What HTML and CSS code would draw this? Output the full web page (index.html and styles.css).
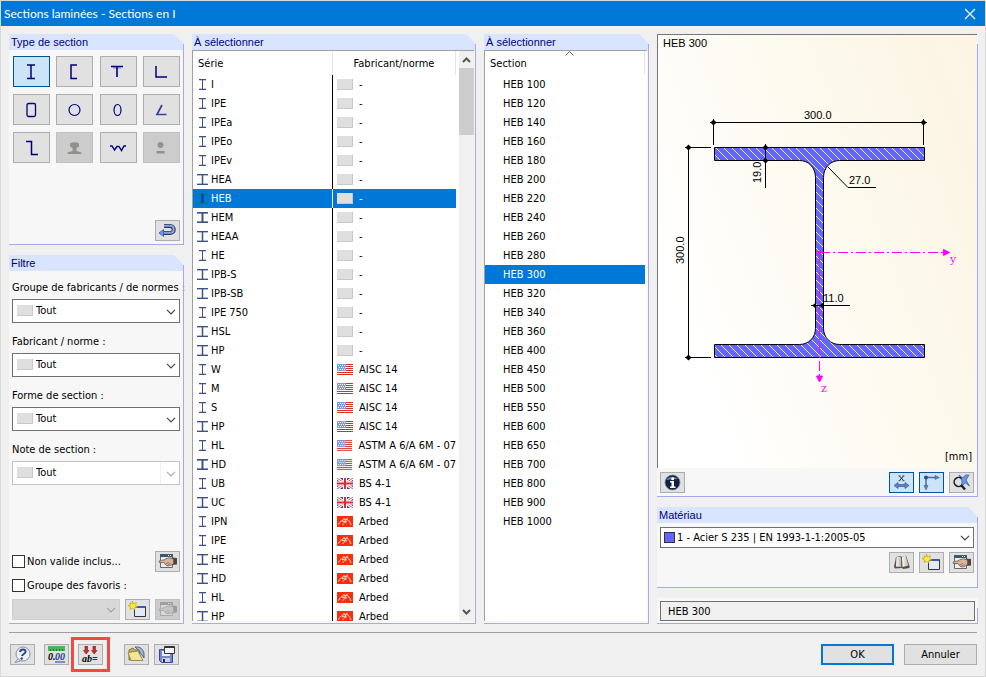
FILE: index.html
```html
<!DOCTYPE html>
<html lang="fr">
<head>
<meta charset="utf-8">
<title>Sections laminées - Sections en I</title>
<link rel="stylesheet" href="styles.css">
</head>
<body>
<svg class="defs" aria-hidden="true">
  <defs>
    <linearGradient id="page" x1="0" x2="1"><stop offset="0" stop-color="#fff"/><stop offset="1" stop-color="#b9b2a8"/></linearGradient>
    <symbol id="i-narrow" viewBox="0 0 12 11"><path d="M2 1.500h7M2 9.500h7" stroke="#c9cfe2"/><path d="M2 .5h7M2 10.500h7M5.500 1v9" stroke="#3f5087"/></symbol>
    <symbol id="i-wide" viewBox="0 0 12 11"><path d="M0 1.500h11M0 9.500h11" stroke="#b4bcd8"/><path d="M0 .5h11M0 10.500h11" stroke="#3f5087"/><path d="M5.500 1v9" stroke="#3f5087" stroke-width="1.500"/></symbol>
    <symbol id="i-thick" viewBox="0 0 12 11"><path d="M0 1.500h11M0 9.500h11" stroke="#8390ba"/><path d="M0 .5h11M0 10.500h11" stroke="#3f5087"/><path d="M5.500 1v9" stroke="#3f5087" stroke-width="2"/></symbol>
    <symbol id="i-selected" viewBox="0 0 12 11"><path d="M0 1h11M0 10h11" stroke="#007c8c" stroke-width="2"/><path d="M5.500 1v9" stroke="#00458f" stroke-width="2.500"/></symbol>
    <symbol id="f-none" viewBox="0 0 16 11"><path fill="#dfdfdf" d="M0 0h16v11H0z"/><path d="M0 10.500h15.500V0" fill="none" stroke="#c8c8c8"/></symbol>
    <symbol id="f-us" viewBox="0 0 16 11"><path fill="#fff" d="M0 0h16v11H0z"/><path d="M0 .5h16M0 2.500h16M0 4.500h16M0 6.500h16M0 8.500h16M0 10.500h16" stroke="#dc2f22"/><path fill="#7f9bdc" d="M0 0h9v7H0z"/><path d="M1 1.500h8M2 3.500h7M1 5.500h8" stroke="#fff" stroke-dasharray="1 1"/></symbol>
    <symbol id="f-uk" viewBox="0 0 16 11"><path fill="#3049a0" d="M0 0h16v11H0z"/><path d="M0 0l16 11M16 0L0 11" stroke="#fff" stroke-width="3"/><path d="M0 0l16 11M16 0L0 11" stroke="#e05a5a"/><path d="M8 0v11M0 5.500h16" stroke="#fff" stroke-width="4"/><path d="M8 0v11M0 5.500h16" stroke="#e0282e" stroke-width="2"/></symbol>
    <symbol id="f-arbed" viewBox="0 0 16 11"><path fill="#fb2d0b" d="M0 0h16v11H0z"/><path d="M1.500 8.500C3 5.500 5 3.500 8.500 3.500S12.500 5.500 14 9M5 5.500l5 .5M8.500 3.500c0 2-.5 4-3 5M9 3.200l2-1.200M8 3.500L6.500 2" fill="none" stroke="#ffdcd2"/></symbol>
    <symbol id="edit" viewBox="0 0 19 17"><path fill="#e9edf5" stroke="#5d6a74" d="M2.500 1.500h12v13h-12z"/><path fill="#3c5a66" d="M2 1h13v3H2z"/><path fill="#fff" d="M10 2h1v1h-1zM12 2h1v1h-1z"/><path fill="#4d453f" d="M13.500 4.500L19 5v6.500l-5 .5z"/><path d="M1 8.200c2-1 3.500-1 5-1.200C8 5.500 10 4.800 12 4.800l3.500 1.400v4.300L13 12.200c-2 .9-3.500.9-5 0L6 9.500 1.500 9.700z" fill="#d8b39c" stroke="#6e5446" stroke-width=".8"/><path d="M8 10.800l3-1.600M9.500 12l3-1.500" stroke="#85604e" stroke-width=".7"/></symbol>
    <symbol id="new" viewBox="0 0 19 17"><path fill="#e5e9f2" stroke="#303744" d="M6.500 5.500h11v10h-11z"/><path fill="#3c5da8" d="M7 5h10v2H7z"/><path d="M4.500 0l1 3 3-1.500L7.500 4.500 9.500 6 7 6.500 6.500 9 4.500 7 2 8.500 2.500 6 0 4.500 2.500 4 2 1.500 4 3z" fill="#ffef2f" stroke="#b39d0c" stroke-width=".6"/></symbol>
    <symbol id="chev" viewBox="0 0 10 6"><path d="M1 .8l4 4 4-4" fill="none" stroke="currentColor" stroke-width="1.200"/></symbol>
    <symbol id="arrow" viewBox="0 0 9 6"><path d="M1 5l3.500-3.500L8 5" fill="none" stroke="#555" stroke-width="2"/></symbol>
    <pattern id="hatch" width="8" height="8" patternUnits="userSpaceOnUse"><path fill="#6464ff" d="M0 0h8v8H0z"/><path d="M-1-1l10 10M-1 7l2 2M7-1l2 2" stroke="#e8e8ff" stroke-width="1"/></pattern>
  </defs>
</svg>

<div class="dialog">
  <header class="titlebar">
    <h1>Sections laminées - Sections en I</h1>
    <button class="close" aria-label="Fermer"><svg width="12" height="12" viewBox="0 0 12 12"><path d="M1 1l10 10M11 1L1 11" stroke="#fff" stroke-width="1.200"/></svg></button>
  </header>

  <main class="columns">
    <div class="column">
      <section class="panel">
        <h2>Type de section</h2>
        <div class="types">
          <button class="btn active" aria-label="I"><svg viewBox="0 0 18 18"><path d="M4 2h8M4 15.500h8M8 2v14" stroke="#00007b" stroke-width="1.500"/></svg></button>
          <button class="btn" aria-label="U"><svg viewBox="0 0 18 18"><path d="M11 2H5v13.500h6" fill="none" stroke="#00007b" stroke-width="1.500"/></svg></button>
          <button class="btn" aria-label="T"><svg viewBox="0 0 18 18"><path d="M2 3.500h12M8 4v10" stroke="#00007b" stroke-width="1.600"/><path d="M4 5h8" stroke="#00007b" opacity=".4"/></svg></button>
          <button class="btn" aria-label="L"><svg viewBox="0 0 18 18"><path d="M4 3v11h11" fill="none" stroke="#00007b" stroke-width="1.500"/></svg></button>
          <button class="btn" aria-label="Tube rectangulaire"><svg viewBox="0 0 18 18"><rect x="4" y="2.500" width="8.500" height="13" rx="1.500" fill="none" stroke="#00007b" stroke-width="1.300"/></svg></button>
          <button class="btn" aria-label="Tube rond"><svg viewBox="0 0 18 18"><circle cx="8.500" cy="9" r="5.500" fill="none" stroke="#00007b" stroke-width="1.200"/></svg></button>
          <button class="btn" aria-label="Tube ovale"><svg viewBox="0 0 18 18"><ellipse cx="8.500" cy="9" rx="3.500" ry="5.500" fill="none" stroke="#00007b" stroke-width="1.200"/></svg></button>
          <button class="btn" aria-label="Cornière ouverte"><svg viewBox="0 0 18 18"><path d="M10 4L5 13.500h9.500" fill="none" stroke="#3c3ca0" stroke-width="1.700"/></svg></button>
          <button class="btn" aria-label="Z"><svg viewBox="0 0 18 18"><path d="M3 2.500h5.500v13H15" fill="none" stroke="#00007b" stroke-width="1.500"/></svg></button>
          <button class="btn off" disabled aria-label="Rail"><svg viewBox="0 0 18 18"><path fill="#92928c" d="M4 4.500Q8.500 2 13 4.500v3l-2.500 1.500v3l5 1.500V15H1.500v-1.500l5-1.500V9L4 7.500z"/></svg></button>
          <button class="btn" aria-label="Tôle ondulée"><svg viewBox="0 0 18 18"><path d="M1 7h2l2.500 4L8 7.500h2l2.500 4L15 7h2" fill="none" stroke="#00007b" stroke-width="1.400"/></svg></button>
          <button class="btn off" disabled aria-label="Plat et rond"><svg viewBox="0 0 18 18"><circle cx="8.500" cy="6" r="3" fill="#92928c"/><path fill="#92928c" d="M4.500 12h8v2.500h-8z"/></svg></button>
        </div>
        <div class="end-row">
          <button class="btn tool" aria-label="Rétablir"><svg viewBox="0 0 19 17"><path d="M6 4h6c5 0 5 7 0 7H5" fill="none" stroke="#2c3660" stroke-width="4"/><path d="M6 3.700h6c5 0 5 7 0 7H5" fill="none" stroke="#8aa5de" stroke-width="2"/><path d="M1 11l4.500-3.500v7z" fill="#6d9bea" stroke="#2c4a96" stroke-width=".7"/></svg></button>
        </div>
      </section>

      <section class="panel grow">
        <h2>Filtre</h2>
        <div class="filters">
          <div class="field"><label for="f1">Groupe de fabricants / de normes :</label><span class="combo"><select id="f1"><option>Tout</option></select><svg class="swatch"><use href="#f-none"/></svg><svg class="chev"><use href="#chev"/></svg></span></div>
          <div class="field"><label for="f2">Fabricant / norme :</label><span class="combo"><select id="f2"><option>Tout</option></select><svg class="swatch"><use href="#f-none"/></svg><svg class="chev"><use href="#chev"/></svg></span></div>
          <div class="field"><label for="f3">Forme de section :</label><span class="combo"><select id="f3"><option>Tout</option></select><svg class="swatch"><use href="#f-none"/></svg><svg class="chev"><use href="#chev"/></svg></span></div>
          <div class="field"><label for="f4">Note de section :</label><span class="combo pale"><select id="f4"><option>Tout</option></select><svg class="swatch"><use href="#f-none"/></svg><svg class="chev"><use href="#chev"/></svg></span></div>
          <div class="options">
            <div class="line"><input type="checkbox" id="c1"><label for="c1">Non valide inclus...</label><button class="btn tool push" aria-label="Modifier le filtre"><svg viewBox="0 0 19 17"><use href="#edit"/></svg></button></div>
            <div class="line"><input type="checkbox" id="c2"><label for="c2">Groupe des favoris :</label></div>
            <div class="line favs"><span class="combo off"><select aria-label="Groupe des favoris" disabled><option></option></select><svg class="chev"><use href="#chev"/></svg></span><button class="btn tool" aria-label="Nouveau groupe"><svg viewBox="0 0 19 17"><use href="#new"/></svg></button><button class="btn tool off" disabled aria-label="Modifier le groupe"><svg class="faded" viewBox="0 0 19 17"><use href="#edit"/></svg></button></div>
          </div>
        </div>
      </section>
    </div>

    <section class="panel list">
      <h2>À sélectionner</h2>
      <div class="scroller">
        <div class="rows">
          <table class="series">
            <thead><tr><th>Série</th><th>Fabricant/norme</th></tr></thead>
            <tbody id="series"></tbody>
          </table>
        </div>
        <div class="scrollbar"><svg viewBox="0 0 9 6"><use href="#arrow"/></svg><div class="thumb"></div><svg class="down" viewBox="0 0 9 6"><use href="#arrow"/></svg></div>
      </div>
    </section>

    <section class="panel list">
      <h2>À sélectionner</h2>
      <div class="scroller">
        <div class="rows">
          <table class="sections">
            <thead><tr><th>Section<svg class="sort" viewBox="0 0 9 5"><path d="M.5 4.500l4-4 4 4" fill="none" stroke="#666"/></svg></th></tr></thead>
            <tbody id="sections"></tbody>
          </table>
        </div>
      </div>
    </section>

    <div class="column">
      <section class="panel preview grow">
        <div class="canvas">
          <p>HEB 300</p>
          <svg class="drawing" viewBox="658 55 319 393">
            <path d="M714.500 147.500h210v13h-85c-9 0-16 7-16 17v151c0 9 7 16 16 16h85v13h-210v-13h85c9 0 16-7 16-16v-151c0-10-7-17-16-17h-85z" fill="url(#hatch)" stroke="#000"/>
            <g stroke="#000" fill="none">
              <path d="M710 122.500h217M713.500 119v26M923.500 119v26M685 147.500h26M688.500 145v215M685 357.500h26M765.500 144v44M828 167l20 20.500h28M811 305.500h39"/>
            </g>
            <g fill="#000">
              <path d="M710.500 122.500l3-3 3 3-3 3zM920.500 122.500l3-3 3 3-3 3zM685.500 147.500l3-3 3 3-3 3zM685.500 357.500l3-3 3 3-3 3zM762.500 147.500l3-3 3 3-3 3zM762.500 160.500l3-3 3 3-3 3zM812 305.500l4-3v6zM819.500 305.500l4-3v6z"/>
            </g>
            <g font-size="11">
              <text x="804" y="119">300.0</text>
              <text x="849" y="184">27.0</text>
              <text x="823" y="302">11.0</text>
              <text transform="translate(684 264) rotate(-90)">300.0</text>
              <text transform="translate(761 183) rotate(-90)">19.0</text>
            </g>
            <g fill="#f0f" stroke="#f0f">
              <path d="M820 252.500h123" stroke-dasharray="10 3 2 3"/>
              <path d="M819.500 253v123" stroke-dasharray="10 3 2 3"/>
              <circle cx="819.500" cy="252.500" r="1.500"/>
              <path d="M943.500 249.500l6 3-6 3zM816.500 376l3 6 3-6z"/>
            </g>
            <g class="axis" font-size="11" fill="#f0f"><text x="950" y="263">y</text><text x="821" y="392">z</text></g>
          </svg>
          <p class="unit">[mm]</p>
        </div>
        <div class="preview-tools">
          <button class="btn tool" aria-label="Informations"><svg viewBox="0 0 19 17"><circle cx="9.500" cy="8.500" r="7.500" fill="#15203c" stroke="#7484a6" stroke-width=".8"/><path d="M3 6q5-6 12-1-5 0-12 1z" fill="#6f82ad"/><circle cx="9.700" cy="4.700" r="1.500" fill="#fff"/><path fill="#fff" d="M7 7h4v5.500h1.500V14H7v-1.500h1.500v-4H7z"/></svg></button>
          <button class="btn tool active push" aria-label="Cotes"><svg viewBox="0 0 19 17"><path d="M7.500 2l4 4.500M11.500 2l-4 4.500" stroke="#222"/><path d="M6.500 1.800h2M10.500 1.800h2M6.500 6.700h2M10.500 6.700h2" stroke="#222" stroke-width=".7"/><path d="M2 11.500L6 8.500v2h7v-2l4 3-4 3v-2H6v2z" fill="#5f84cc" stroke="#3a5691" stroke-width=".7"/></svg></button>
          <button class="btn tool active" aria-label="Axes"><svg viewBox="0 0 19 17"><path d="M4 3.500h10M4 4v9" stroke="#4a66a3" stroke-width="1.500"/><path fill="#5f7fc0" stroke="#3a5691" stroke-width=".5" d="M13 1.500l4.500 2-4.500 2zM2 11.500l2 4.500 2-4.500z"/><circle cx="4" cy="3.500" r="2" fill="#2f4a85"/></svg></button>
          <button class="btn tool" aria-label="Zoom total"><svg viewBox="0 0 19 17"><path d="M7 1l4 3 2.500-3H17l-3 5 3.500 6-4-3-4 3 .5-5z" fill="#6c95e6" stroke="#3a5fae" stroke-width=".8"/><path d="M9.500 4.500A4.500 4.500 0 1 0 10 11" fill="none" stroke="#222" stroke-width="1.600"/><path d="M9 11l4 4.500" stroke="#222" stroke-width="2.500"/></svg></button>
        </div>
      </section>

      <section class="panel material">
        <h2>Matériau</h2>
        <div class="material-body">
          <span class="combo"><select aria-label="Matériau"><option>1 - Acier S 235 | EN 1993-1-1:2005-05</option></select><i class="colour"></i><svg class="chev"><use href="#chev"/></svg></span>
          <div class="end-row trio">
            <button class="btn tool" aria-label="Bibliothèque"><svg viewBox="0 0 19 17"><path fill="#5c4f49" d="M2 13L4 3l4-1 2 1 4-1.500L17.500 12v2L11 15l-1-1-7 .500z"/><path fill="url(#page)" d="M4.500 3l3-.5 1.700 1V13L4 12.500z"/><path fill="url(#page)" d="M10 3.500L13.500 1l3 10.500L10.500 13z"/></svg></button>
            <button class="btn tool" aria-label="Nouveau matériau"><svg viewBox="0 0 19 17"><use href="#new"/></svg></button>
            <button class="btn tool" aria-label="Modifier le matériau"><svg viewBox="0 0 19 17"><use href="#edit"/></svg></button>
          </div>
        </div>
      </section>

      <section class="panel result"><input type="text" aria-label="Section choisie" value="HEB 300" readonly></section>
    </div>
  </main>

  <footer class="footer">
    <div class="group">
      <button class="btn tool" aria-label="Aide"><svg viewBox="0 0 19 17"><path d="M5 13l-3 3.500 7-2" fill="#e9effa" stroke="#8a92a2"/><circle cx="10" cy="8" r="7" fill="#edf2fb" stroke="#8a92a2"/><path d="M7 6c.5-3.500 6.500-3 5.500 0-.5 2-3 2-3.500 4" fill="none" stroke="#2d4a86" stroke-width="2"/><circle cx="8.700" cy="12.500" r="1.200" fill="#2d4a86"/></svg></button>
      <button class="btn tool" aria-label="Unités et décimales"><svg viewBox="0 0 19 17"><path fill="#4fb55c" d="M1 0h17v5H1z"/><path d="M3.500 3v2M6.500 3v2M9.500 3v2M12.500 3v2M15.500 3v2" stroke="#17732a"/><text class="num" x="1" y="14" font-size="10">0.</text><text class="num blue" x="8" y="14" font-size="10">00</text><path d="M8 16h10" stroke="#1c3a94"/></svg></button>
      <span class="marked"><button class="btn tool" aria-label="Noms des paramètres"><svg viewBox="0 0 19 17"><path d="M4 0h2.500v4.500H8L5.200 8 2.500 4.500H4zM12 0h2.500v4.500H16L13.200 8l-2.700-3.500H12z" fill="#d32b2b" stroke="#7a1717" stroke-width=".6"/><text class="num" x="1" y="16" font-size="10">ab=</text></svg></button></span>
    </div>
    <div class="group files">
      <button class="btn tool" aria-label="Ouvrir"><svg viewBox="0 0 19 17"><path d="M8 1q7-1 9 6v5l-4-6z" fill="#9fb6de" stroke="#344f84" stroke-width=".8"/><path d="M2 14V4l4-2 2 2h4l2 10z" fill="#c6b052" stroke="#6f5e20" stroke-width=".8"/><path d="M1 6.500L11 5l5 9.500H4z" fill="#f2e597" stroke="#8c7a35" stroke-width=".8"/></svg></button>
      <button class="btn tool" aria-label="Enregistrer"><svg viewBox="0 0 19 17"><path d="M2.500 3.500h13v13h-11l-2-2z" fill="#7a82d6" stroke="#3c4590"/><path fill="#eeeef8" d="M5 5h8v5H5z"/><path fill="#d0d0d8" d="M5 12h8v4H5z"/><path fill="#222954" d="M6 13h2v3H6z"/><path d="M7.500.5h10v7h-10z" fill="#f6f6f6" stroke="#333"/><path fill="#333" d="M8 1h9v1H8z"/></svg></button>
    </div>
    <div class="group commands">
      <button class="cmd primary">OK</button>
      <button class="cmd">Annuler</button>
    </div>
  </footer>
</div>
<script src="script.js"></script>
</body>
</html>
```
FILE: styles.css
```css
* { box-sizing: border-box; }
body { margin: 0; color: #000; background: #f0f0f0; }
body, button, input, select { font: 11px/14px "DejaVu Sans Condensed", "DejaVu Sans", sans-serif; }
h1, h2, p { margin: 0; font-weight: normal; }
svg { display: block; }
.defs { position: absolute; width: 0; height: 0; }

.dialog { display: flex; flex-direction: column; height: 100vh; min-height: 600px; border: 1px solid #d9d9d9; }
.titlebar { display: flex; align-items: center; justify-content: space-between; height: 25px; padding: 0 9px 0 3px; background: #0078d7; color: #fff; }
.titlebar h1 { font: 12px/16px Lato, "Open Sans", sans-serif; }
.close { padding: 0; border: 0; background: none; }

.columns { flex: 1; min-height: 0; display: grid; grid-template-columns: 175px 284fr 165fr 321fr; grid-template-rows: minmax(0, 1fr); gap: 8px; padding: 8px 7px 0 8px; }
.column { display: flex; flex-direction: column; gap: 10px; min-width: 0; }
.grow { flex: 1; min-height: 0; }

.panel { position: relative; display: flex; flex-direction: column; min-width: 0; background: #f7f7f7; border-bottom: 1px solid #a8a8ee; }
.panel::after { content: ""; position: absolute; top: 10px; right: 0; bottom: 0; width: 1px; background: #a8a8ee; }
.panel h2 { height: 16px; padding-left: 2px; background: #d9e5ff; color: #00007b; font: 11px/16px "Liberation Sans", sans-serif; clip-path: polygon(0 0, calc(100% - 10px) 0, 100% 10px, 100% 100%, 0 100%); }
.panel:has(h2) { background: linear-gradient(#f0f0f0 16px, #f7f7f7 16px); }

.btn { display: flex; align-items: center; justify-content: center; padding: 0; border: 1px solid #adadad; background: #e1e1e1; }
.btn.active { background: #cce4f7; border-color: #005499; }
.btn.off { background: #ccc; border-color: #bfbfbf; }
.tool { width: 25px; height: 21px; flex: none; }
.tool svg { width: 19px; height: 17px; }
.push { margin-left: auto; }
.faded { filter: grayscale(1); opacity: .35; }
.end-row { display: flex; justify-content: flex-end; }

.types { display: grid; grid-template-columns: repeat(4, 37px); justify-content: space-between; gap: 7px 0; padding: 6px 4px 0; }
.types .btn { height: 31px; }
.types svg { width: 18px; height: 18px; }
.types + .end-row { padding: 57px 4px 3px; }

.filters { flex: 1; display: flex; flex-direction: column; gap: 12px; padding: 10px 4px 3px 3px; }
.field { display: flex; flex-direction: column; gap: 4px; }
.field label { white-space: nowrap; }
.combo { position: relative; display: block; color: #444; }
.combo select { appearance: none; display: block; width: 100%; height: 24px; padding: 0 20px 0 23px; border: 1px solid #707070; border-radius: 0; background: #fff; color: #000; }
.combo .swatch { position: absolute; left: 5px; top: 6px; width: 16px; height: 11px; }
.chev { position: absolute; right: 4px; top: 10px; width: 10px; height: 6px; }
.combo.pale { color: #aaa; }
.combo.pale select { border-color: #c4c4c4; background: linear-gradient(#f0f0f0, #f0f0f0) calc(100% - 18px) 0 / 1px 100% no-repeat #fff; }
.combo.off { flex: 1; color: #a0a0a0; }
.combo.off select { height: 21px; background: #ccc; border-color: #bfbfbf; }
.combo.off .chev { top: 8px; }
.options { margin-top: auto; display: flex; flex-direction: column; gap: 3px; }
.line { display: flex; align-items: center; gap: 2px; height: 21px; }
.line.favs { gap: 5px; }
.line input { appearance: none; width: 13px; height: 13px; margin: 0; border: 1px solid #333; background: #fff; }

.list { padding-bottom: 2px; }
.scroller { flex: 1; min-height: 0; display: flex; margin-right: 2px; border: 1px solid #a0a0a0; border-width: 1px 0 0 1px; background: #fff; }
.rows { flex: 1; min-width: 0; overflow: hidden; }
.scrollbar { display: flex; flex-direction: column; align-items: center; width: 15px; margin-left: 3px; padding: 6px 0; background: #f0f0f0; }
.scrollbar svg { width: 9px; height: 6px; }
.scrollbar .down { margin-top: auto; transform: rotate(180deg); }
.thumb { width: 100%; height: 67px; margin-top: 5px; background: #cdcdcd; }
table { width: 100%; border-collapse: separate; border-spacing: 0; table-layout: fixed; }
th, td { padding: 1px 0 0; text-align: left; font-weight: normal; white-space: nowrap; overflow: hidden; }
th { position: relative; height: 24px; padding-left: 5px; border-right: 1px solid #e5e5e5; }
td { height: 19px; }
.series td { padding-top: 0; }
td div { display: flex; align-items: center; height: 19px; line-height: 19px; }
.series th:first-child { width: 140px; }
.series th + th { padding-left: 0; text-align: center; }
.series td:first-child { padding-left: 4px; border-right: 1px solid #000; }
.series td:first-child div { gap: 2px; }
.series td:first-child svg { width: 12px; height: 11px; }
.series td + td { padding-left: 4px; }
.series td + td div { gap: 6px; }
.series td + td svg { width: 16px; height: 11px; }
.series .selected td:first-child { border-color: #fff; }
.sections td { padding-left: 18px; }
.sections { width: calc(100% - 2px); }
.selected td { background: #0078d7; color: #fff; }
.sort { position: absolute; top: 0; left: 50%; width: 9px; height: 5px; }

.canvas { flex: 1; min-height: 0; display: flex; flex-direction: column; margin-right: 1px; border: 1px solid #777; border-width: 1px 0 0 1px; background: linear-gradient(70deg, #fff 15%, #fcf8ea 70%, #fdf4e4); }
.canvas p { height: 20px; padding: 1px 5px; font: 11px/15px "Liberation Sans", sans-serif; }
.canvas .unit { text-align: right; font: 11px/15px "DejaVu Sans Condensed", sans-serif; }
.drawing { flex: 1; min-height: 0; width: 100%; font-family: "Liberation Sans", sans-serif; }
.axis { font-family: "DejaVu Serif", serif; }
.preview-tools { display: flex; align-items: center; gap: 5px; height: 28px; padding: 0 4px 0 3px; }
.material-body { display: flex; flex-direction: column; gap: 4px; padding: 4px 4px 14px 3px; }
.material-body .combo select { height: 21px; padding-left: 16px; }
.material-body .chev { top: 8px; }
.trio { gap: 5px; }
.colour { position: absolute; left: 4px; top: 5px; width: 11px; height: 11px; border: 1px solid #333; background: #6464ff; }
.result { padding: 3px 3px 2px; }
.result input { height: 20px; padding: 0 7px; border: 1px solid #707070; background: #f0f0f0; outline: 1px solid #fafafa; }

.footer { display: flex; align-items: center; height: 44px; margin: 8px 8px 0; border-top: 1px solid #a0a0a0; }
.group { display: flex; gap: 9px; padding-left: 1px; }
.files { gap: 5px; margin-left: 20px; }
.commands { gap: 10px; margin-left: auto; }
.marked { position: relative; }
.marked::after { content: ""; position: absolute; inset: -7px; border: 3px solid #f04a44; }
.num { font-family: "Liberation Serif", serif; font-style: italic; font-weight: bold; }
.num.blue { fill: #1c3a94; }
.cmd { width: 73px; height: 21px; padding: 0; border: 1px solid #adadad; background: #e1e1e1; color: #000; }
.cmd.primary { border: 2px solid #0078d7; }
```
FILE: script.js
```js
const series = [
  ['I', 'narrow'], ['IPE', 'narrow'], ['IPEa', 'narrow'], ['IPEo', 'narrow'], ['IPEv', 'narrow'],
  ['HEA', 'wide'], ['HEB', 'selected'], ['HEM', 'thick'], ['HEAA', 'wide'], ['HE', 'narrow'],
  ['IPB-S', 'wide'], ['IPB-SB', 'wide'], ['IPE 750', 'narrow'], ['HSL', 'wide'], ['HP', 'wide'],
  ['W', 'narrow', 'us', 'AISC 14'], ['M', 'narrow', 'us', 'AISC 14'], ['S', 'narrow', 'us', 'AISC 14'],
  ['HP', 'wide', 'us', 'AISC 14'], ['HL', 'narrow', 'us', 'ASTM A 6/A 6M - 07'],
  ['HD', 'thick', 'us', 'ASTM A 6/A 6M - 07'], ['UB', 'narrow', 'uk', 'BS 4-1'], ['UC', 'wide', 'uk', 'BS 4-1'],
  ['IPN', 'narrow', 'arbed', 'Arbed'], ['IPE', 'narrow', 'arbed', 'Arbed'], ['HE', 'wide', 'arbed', 'Arbed'],
  ['HD', 'wide', 'arbed', 'Arbed'], ['HL', 'narrow', 'arbed', 'Arbed'], ['HP', 'wide', 'arbed', 'Arbed']
];
const sizes = [100, 120, 140, 160, 180, 200, 220, 240, 260, 280, 300, 320, 340, 360, 400, 450,
  500, 550, 600, 650, 700, 800, 900, 1000];

document.getElementById('series').innerHTML = series.map(([name, shape, flag = 'none', norm = '-']) =>
  `<tr${name === 'HEB' ? ' class="selected"' : ''}>
    <td><div><svg><use href="#i-${shape}"/></svg>${name}</div></td>
    <td><div><svg><use href="#f-${flag}"/></svg>${norm}</div></td>
  </tr>`).join('');

document.getElementById('sections').innerHTML = sizes.map(size =>
  `<tr${size === 300 ? ' class="selected"' : ''}><td>HEB ${size}</td></tr>`).join('');
```
